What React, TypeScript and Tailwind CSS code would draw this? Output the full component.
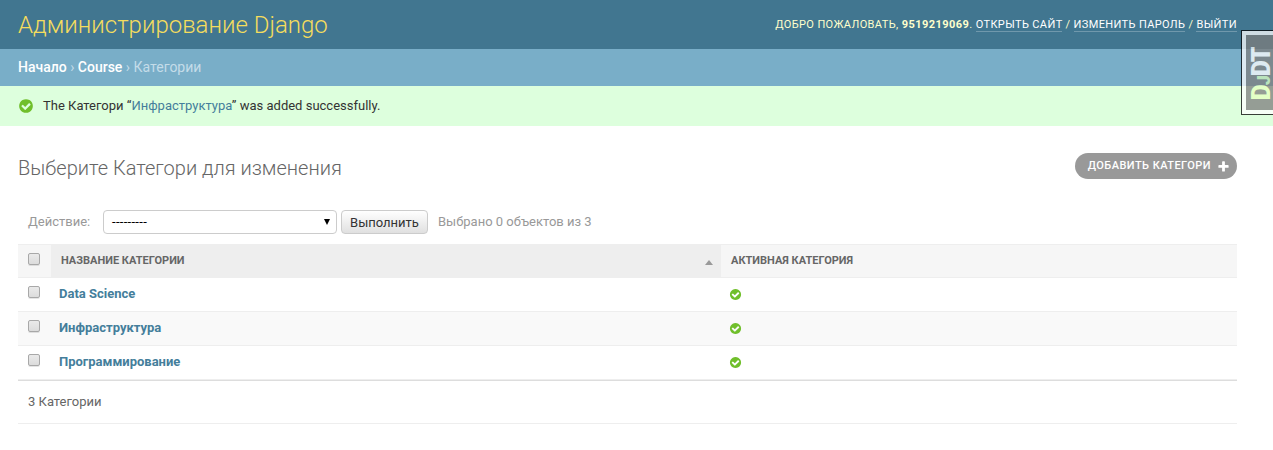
import React from "react";

const CHECK =
  "M1412 734q0-28-18-46l-91-90q-19-19-45-19t-45 19l-408 407-226-226q-19-19-45-19t-45 19l-91 90q-18 18-18 46 0 27 18 45l362 362q19 19 45 19 27 0 46-19l543-543q18-18 18-45zm252 162q0 209-103 385.5t-279.5 279.5-385.5 103-385.5-103-279.5-279.5-103-385.5 103-385.5 279.5-279.5 385.5-103 385.5 103 279.5 279.5 103 385.5z";
const PLUS =
  "M1600 796v192q0 40-28 68t-68 28h-416v416q0 40-28 68t-68 28h-192q-40 0-68-28t-28-68v-416h-416q-40 0-68-28t-28-68v-192q0-40 28-68t68-28h416v-416q0-40 28-68t68-28h192q40 0 68 28t28 68v416h416q40 0 68 28t28 68z";

function Icon({ d, className }: { d: string; className: string }) {
  return (
    <svg viewBox="0 0 1792 1792" className={className} fill="currentColor">
      <path d={d} />
    </svg>
  );
}

function Checkbox() {
  return (
    <input
      type="checkbox"
      className="block size-3 appearance-none rounded-[2px] border border-[#a8a8a8] bg-linear-to-b from-[#eaeaea] to-[#dcdcdc] shadow-[0_1px_0_rgba(0,0,0,0.1)]"
    />
  );
}

const rows = ["Data Science", "Инфраструктура", "Программирование"];

function HeaderLink({ children }: { children: React.ReactNode }) {
  return (
    <a href="#" className="border-b border-white/25 text-white">
      {children}
    </a>
  );
}

export default function App() {
  return (
    <div className="relative h-[450px] overflow-hidden bg-white font-['Roboto','Liberation_Sans',sans-serif] text-[13px] text-[#333]">
      <header className="flex h-[49px] justify-between bg-[#417690] pr-9 pl-[18px] text-[#ffc]">
        <h1 className="pt-[9px] text-[24px] leading-8 font-light text-[#f5dd5d]">Администрирование Django</h1>
        <div className="pt-[18px] text-[11px] leading-[14px] tracking-[0.38px] uppercase">
          Добро пожаловать, <strong className="font-bold tracking-[0.45px]">9519219069</strong>.{" "}
          <HeaderLink>Открыть сайт</HeaderLink> / <HeaderLink>Изменить пароль</HeaderLink> /{" "}
          <HeaderLink>Выйти</HeaderLink>
        </div>
      </header>

      <nav className="h-[37px] bg-[#79aec8] pt-[10px] pl-[18px] text-[14px] leading-4 text-[#c4dce8]">
        <a href="#" className="font-medium text-white">Начало</a> ›{" "}
        <a href="#" className="font-medium text-white">Course</a> › Категории
      </nav>

      <div className="flex h-10 items-center bg-[#dfd] pl-[18px]">
        <Icon d={CHECK} className="size-4 text-[#70bf2b]" />
        <p className="ml-[9px]">
          The Категори “<a href="#" className="text-[#447e9b]">Инфраструктура</a>” was added successfully.
        </p>
      </div>

      <main className="pr-9 pl-[18px]">
        <div className="flex h-[72px] items-start justify-between pt-[27px]">
          <h2 className="text-[20px] leading-[30px] font-light text-[#666]">Выберите Категори для изменения</h2>
          <a
            href="#"
            className="flex h-[26px] items-center rounded-full bg-[#999] pr-[7px] pl-[13px] text-[11px] font-medium tracking-[0.45px] text-white uppercase"
          >
            <span>Добавить Категори</span>
            <Icon d={PLUS} className="ml-[6px] size-[13px]" />
          </a>
        </div>

        <div className="flex h-[46px] items-start pt-3 pl-[10px] leading-6 text-[#999]">
          <span className="w-[75px]">Действие:</span>
          <button className="flex h-6 w-[234px] items-center justify-between rounded-[4px] border border-[#ccc] bg-white pr-[6px] pl-2 text-black">
            <span className="tracking-[0.3px]">---------</span>
            <svg className="h-[6px] w-[6px]" viewBox="0 0 6 6"><path d="M0 0h6L3 6z" /></svg>
          </button>
          <button className="ml-1 h-6 w-[87px] rounded-[4px] border border-[#ccc] bg-linear-to-b from-white to-[#e0e0e0] leading-6 text-[#333]">
            Выполнить
          </button>
          <span className="ml-[10px]">Выбрано 0 объектов из 3</span>
        </div>

        <div className="grid h-[34px] grid-cols-[33px_670px_1fr] border-y border-[#eee] bg-[#f6f6f6] text-[11px] leading-8 font-bold text-[#666] uppercase">
          <div className="pt-2 pl-[10px]"><Checkbox /></div>
          <div className="flex items-start justify-between bg-[#eee] pr-2 pl-[10px]">
            <span>Название категории</span>
            <svg className="mt-[15px] h-[5px] w-2" viewBox="0 0 8 5" fill="#999"><path d="M0 5h8L4 0z" /></svg>
          </div>
          <div className="pl-[10px]">Активная категория</div>
        </div>

        <div>
          {rows.map((name) => (
            <div key={name} className="grid h-[34px] grid-cols-[33px_670px_1fr] border-b border-[#eee] even:bg-[#f9f9f9]">
              <div className="pt-2 pl-[10px]"><Checkbox /></div>
              <a href="#" className="pl-2 leading-8 font-bold text-[#447e9b]">{name}</a>
              <div className="pt-[10px] pl-2"><Icon d={CHECK} className="size-[13px] text-[#70bf2b]" /></div>
            </div>
          ))}
        </div>

        <div className="h-11 border-t border-b border-t-[#ddd] border-b-[#eee] pl-[10px] leading-[42px] text-[#666]">
          3 Категории
        </div>
      </main>

      <div className="absolute top-[30px] right-0 h-[85px] w-8 border border-r-0 border-black bg-white pt-1 pl-1 opacity-75">
        <div className="flex h-[75px] w-[27px] items-center justify-center bg-[#7d7d7d]">
          <div className="-rotate-90 pt-[7px] pr-[2px] text-[25px] leading-[27px] font-black tracking-[-1.2px] whitespace-nowrap text-white">
            <span className="text-[#e6ffbf]">D</span>
            <span className="text-[18px] text-[#cff5b8]">J</span>DT
          </div>
        </div>
      </div>
    </div>
  );
}
